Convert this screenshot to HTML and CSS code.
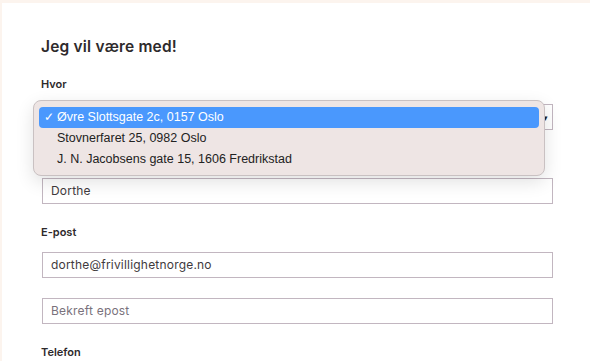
FILE: index.html
```html
<!DOCTYPE html>
<html lang="no">
<head>
  <meta charset="UTF-8" />
  <title>Jeg vil være med</title>
  <link rel="stylesheet" href="styles.css">
</head>
<body>

  <div class="card">
    <h2 class="title">Jeg vil være med!</h2>

    <div class="field">
      <label class="label">Hvor</label>
      <div class="select-wrap">
        <div class="select">
          <span class="select-value">Øvre Slottsgate 2c, 0157 Oslo</span>
          <span class="select-arrow">&#9662;</span>
        </div>
        <!-- open dropdown -->
        <ul class="popup">
          <li class="option selected"><span class="check">&#10003;</span>Øvre Slottsgate 2c, 0157 Oslo</li>
          <li class="option">Stovnerfaret 25, 0982 Oslo</li>
          <li class="option">J. N. Jacobsens gate 15, 1606 Fredrikstad</li>
        </ul>
      </div>
    </div>

    <div class="field">
      <label class="label">Navn</label>
      <div class="input">Dorthe</div>
    </div>

    <div class="field">
      <label class="label">E-post</label>
      <div class="input">dorthe@frivillighetnorge.no</div>
      <div class="input placeholder">Bekreft epost</div>
    </div>

    <div class="field">
      <label class="label">Telefon</label>
    </div>
  </div>

</body>
</html>
```

FILE: styles.css
```css
* { box-sizing: border-box; }
body {
  margin: 0;
  padding: 3px 0 0 2px;
  background-color: #fcf4ee;
  font-family: Inter, "Noto Sans", sans-serif;
  color: #2e2a2c;
  height: 361px;
  overflow: hidden;
}
.card {
  background: white;
  padding: 34px 38px 0 39px;
  height: 358px;
}
.title {
  margin: 0 0 19px;
  font-size: 15.5px;
  line-height: 20px;
  font-weight: 600;
  letter-spacing: 0.2px;
}
.field {
  margin-bottom: 20px;
}
.label {
  display: block;
  font-size: 11px;
  line-height: 16px;
  font-weight: 600;
  margin-bottom: 12px;
}
.input {
  width: 511px;
  height: 26px;
  border: 1px solid #c2b6c0;
  padding: 0 8px;
  font-size: 12px;
  letter-spacing: 0.2px;
  line-height: 24px;
  color: #3f3a3d;
  margin-left: 1px;
}
.input + .input {
  margin-top: 20px;
}
.input.placeholder {
  color: #7a727c;
}
.select-wrap {
  position: relative;
}
.select {
  width: 512px;
  height: 26px;
  border: 1px solid #c2b6c0;
  display: flex;
  align-items: center;
  justify-content: space-between;
  padding: 0 4px 0 8px;
  font-size: 12px;
  margin-top: 1px;
}
.select-arrow {
  font-size: 9px;
  color: #222;
}
.popup {
  position: absolute;
  left: -8px;
  top: -4px;
  width: 512px;
  margin: 0;
  padding: 6px 5px 5px;
  list-style: none;
  background: #eee5e4;
  border: 1px solid #c9c1c2;
  border-radius: 8px;
  box-shadow: 0 6px 18px rgba(0, 0, 0, 0.12);
  font-family: "Liberation Sans", Arial, sans-serif;
  font-size: 12.5px;
  color: #222;
}
.option {
  height: 21px;
  line-height: 21px;
  padding-left: 18px;
  position: relative;
}
.option.selected {
  background: #4a98fd;
  color: white;
  border-radius: 4px;
}
.check {
  position: absolute;
  left: 5px;
  font-size: 12px;
}
```
